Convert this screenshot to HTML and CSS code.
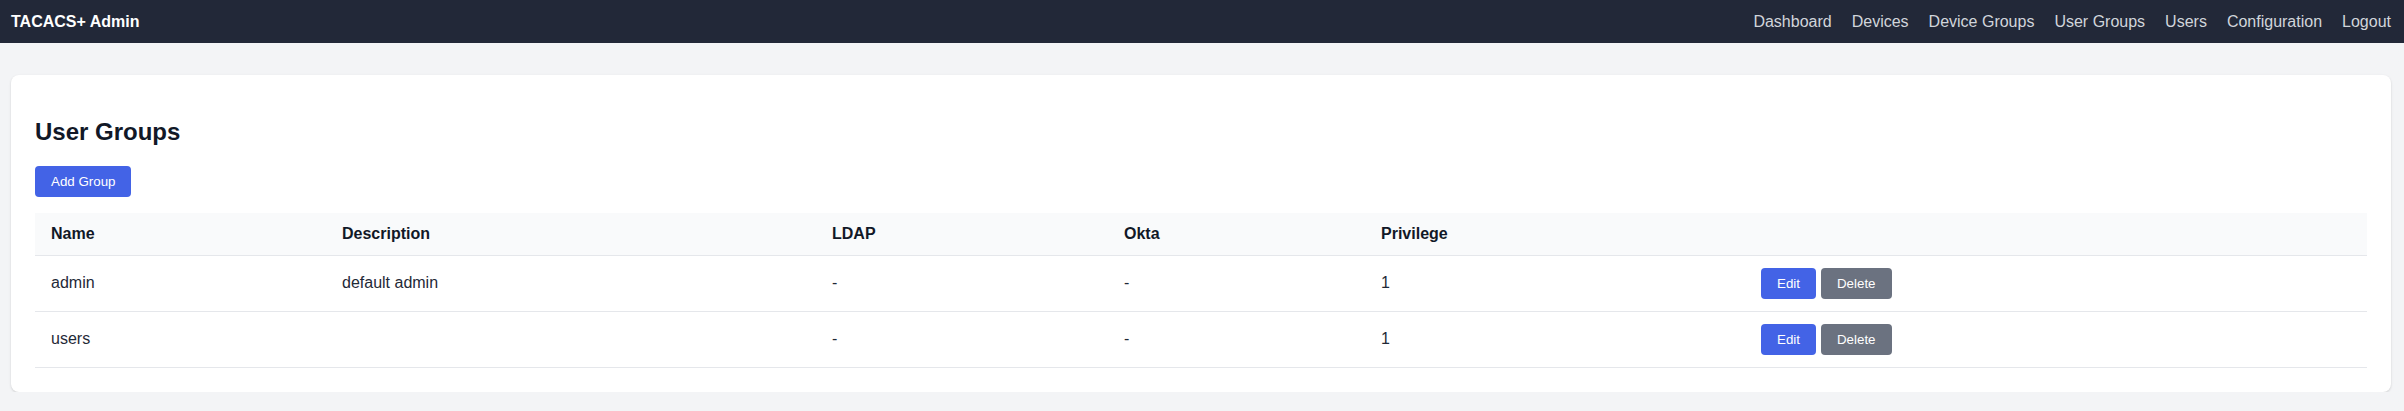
FILE: index.html
```html
<!DOCTYPE html>
<html lang="en">
<head>
<meta charset="utf-8">
<title>TACACS+ Admin - User Groups</title>
<link rel="stylesheet" href="styles.css">
</head>
<body>
<nav class="navbar">
  <div class="brand">TACACS+ Admin</div>
  <div class="nav-links">
    <a href="#">Dashboard</a>
    <a href="#">Devices</a>
    <a href="#">Device Groups</a>
    <a href="#">User Groups</a>
    <a href="#">Users</a>
    <a href="#">Configuration</a>
    <a href="#">Logout</a>
  </div>
</nav>
<main class="main">
  <section class="card">
    <h2 class="title">User Groups</h2>
    <button class="btn btn-primary">Add Group</button>
    <table class="table">
      <thead>
        <tr>
          <th class="col-name">Name</th>
          <th class="col-desc">Description</th>
          <th class="col-ldap">LDAP</th>
          <th class="col-okta">Okta</th>
          <th class="col-priv">Privilege</th>
          <th class="col-actions"></th>
        </tr>
      </thead>
      <tbody>
        <tr>
          <td>admin</td>
          <td>default admin</td>
          <td>-</td>
          <td>-</td>
          <td>1</td>
          <td><div class="actions"><button class="btn btn-primary">Edit</button><button class="btn btn-secondary">Delete</button></div></td>
        </tr>
        <tr>
          <td>users</td>
          <td></td>
          <td>-</td>
          <td>-</td>
          <td>1</td>
          <td><div class="actions"><button class="btn btn-primary">Edit</button><button class="btn btn-secondary">Delete</button></div></td>
        </tr>
      </tbody>
    </table>
  </section>
</main>
</body>
</html>
```
FILE: styles.css
```css
* { box-sizing: border-box; }
html, body {
  margin: 0;
  padding: 0;
}
body {
  font-family: "Liberation Sans", Arial, Helvetica, sans-serif;
  font-size: 16px;
  background: #f3f4f6;
  color: #1f2937;
}
.navbar {
  display: flex;
  justify-content: space-between;
  align-items: center;
  background: #222838;
  height: 43px;
  padding: 0 13px 0 11px;
}
.brand {
  color: #ffffff;
  font-weight: bold;
  font-size: 16px;
}
.nav-links {
  display: flex;
  gap: 20px;
}
.nav-links a {
  color: #d1d5db;
  text-decoration: none;
  font-size: 16px;
}
.main {
  padding: 32px 13px 0 11px;
}
.card {
  background: #ffffff;
  border-radius: 8px;
  box-shadow: 0 1px 3px rgba(0, 0, 0, 0.1), 0 1px 2px rgba(0, 0, 0, 0.06);
  padding: 24px;
}
.title {
  font-size: 24px;
  font-weight: bold;
  color: #111827;
  margin: 19px 0 20px;
  line-height: 27.6px;
}
.btn {
  font-family: "Liberation Sans", Arial, Helvetica, sans-serif;
  font-size: 13.333px;
  line-height: 15px;
  color: #ffffff;
  border: none;
  border-radius: 4px;
  padding: 8px 16px;
  cursor: pointer;
}
.btn-primary { background: #4363e6; }
.btn-secondary { background: #6b7280; }
.table {
  width: 100%;
  border-collapse: collapse;
  margin-top: 16px;
}
.table th {
  background: #f9fafb;
  text-align: left;
  font-weight: bold;
  color: #111827;
  padding: 12px 16px;
  border-bottom: 1px solid #e5e7eb;
  line-height: 18px;
  height: 42px;
}
.table td {
  padding: 12px 16px;
  border-bottom: 1px solid #e5e7eb;
  line-height: 18px;
  color: #1f2937;
  height: 54px;
}
.col-name { width: 291px; }
.col-desc { width: 490px; }
.col-ldap { width: 292px; }
.col-okta { width: 257px; }
.col-priv { width: 380px; }
.actions {
  display: flex;
  gap: 5px;
}
```
